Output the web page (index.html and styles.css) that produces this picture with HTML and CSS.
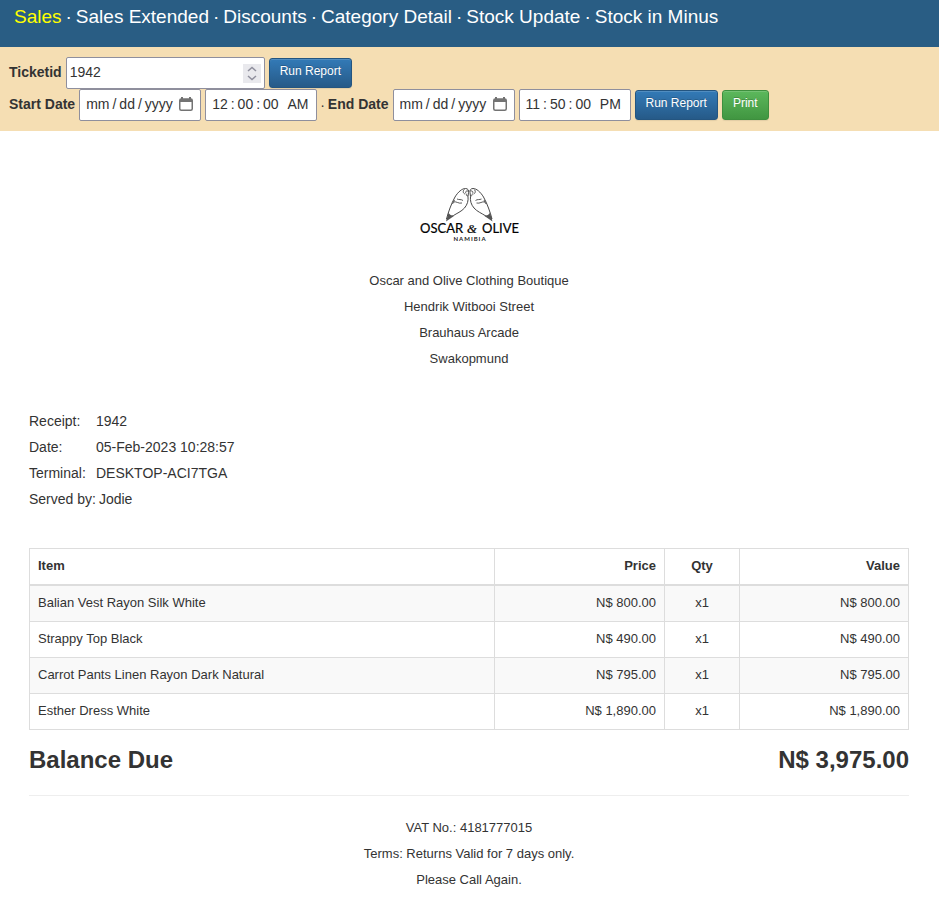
FILE: index.html
```html
<!DOCTYPE html>
<html lang="en">
<head>
<meta charset="utf-8">
<meta name="viewport" content="width=device-width, initial-scale=1">
<title>Sales</title>
<link rel="stylesheet" href="styles.css">
</head>
<body>
<nav class="topnav">
  <a class="active" href="#">Sales</a><span>&middot;</span>
  <a href="#">Sales Extended</a><span>&middot;</span>
  <a href="#">Discounts</a><span>&middot;</span>
  <a href="#">Category Detail</a><span>&middot;</span>
  <a href="#">Stock Update</a><span>&middot;</span>
  <a href="#">Stock in Minus</a>
</nav>

<section class="filters">
  <form class="filter-row">
    <label for="ticket">Ticketid</label>
    <span class="number-field">
      <input class="field ticket" id="ticket" type="number" value="1942">
      <svg class="spinner" viewBox="0 0 18 19" aria-hidden="true"><path d="M5 7 9 3.500 13 7M5 12 9 15.500 13 12"/></svg>
    </span>
    <button class="btn primary" type="button">Run Report</button>
  </form>
  <form class="filter-row">
    <label for="start-date">Start Date</label>
    <input class="field date" id="start-date" type="date">
    <input class="field time" type="time" step="1" value="00:00:00" aria-label="Start time">
    <span class="dot">&middot;</span>
    <label for="end-date">End Date</label>
    <input class="field date" id="end-date" type="date">
    <input class="field time" type="time" step="1" value="23:50:00" aria-label="End time">
    <button class="btn primary" type="button">Run Report</button>
    <button class="btn success" type="button">Print</button>
  </form>
</section>

<main class="receipt">
  <svg class="logo" viewBox="0 0 104 58" role="img" aria-label="Oscar and Olive Namibia">
    <defs>
      <g id="wing">
        <path d="M29.500 34C31 28 34.500 18 38 12c3-5 7-8.500 10.500-8.500 2.500 0 3.500 2 3 4l-.5 4c.5 4-.5 8-3.500 11.500-3 3.500-8 5.500-11 7.500z"/>
        <path class="fine" d="M47.500 4.500c-2 1-1.500 4 .5 4.500M51 6c-2-.5-3 1-2 2.500M51 11c-1.500 0-2-1-1.500-2M36.500 17c3-1 5 2 8.500 1M40 14c2 1 4 0 6 1.500M37.500 15l-2 4"/>
        <path class="tip" d="M29 36.500l2.500-9c1 2.500 3 3 5.500 3.500z"/>
      </g>
    </defs>
    <use href="#wing"/>
    <use href="#wing" transform="matrix(-1 0 0 1 104.500 0)"/>
    <text class="brand" x="3" y="48">OSCAR</text>
    <text class="amp" x="50" y="48">&amp;</text>
    <text class="brand" x="65" y="48">OLIVE</text>
    <text class="place" x="53" y="56">NAMIBIA</text>
  </svg>

  <address class="centered">Oscar and Olive Clothing Boutique<br>Hendrik Witbooi Street<br>Brauhaus Arcade<br>Swakopmund</address>

  <dl class="meta">
    <div><dt>Receipt:</dt><dd>1942</dd></div>
    <div><dt>Date:</dt><dd>05-Feb-2023 10:28:57</dd></div>
    <div><dt>Terminal:</dt><dd>DESKTOP-ACI7TGA</dd></div>
    <div><dt>Served by:</dt><dd>Jodie</dd></div>
  </dl>

  <table class="items">
    <colgroup><col><col class="price"><col class="qty"><col class="value"></colgroup>
    <thead>
      <tr><th>Item</th><th class="num">Price</th><th class="mid">Qty</th><th class="num">Value</th></tr>
    </thead>
    <tbody>
      <tr><td>Balian Vest Rayon Silk White</td><td class="num">N$ 800.00</td><td class="mid">x1</td><td class="num">N$ 800.00</td></tr>
      <tr><td>Strappy Top Black</td><td class="num">N$ 490.00</td><td class="mid">x1</td><td class="num">N$ 490.00</td></tr>
      <tr><td>Carrot Pants Linen Rayon Dark Natural</td><td class="num">N$ 795.00</td><td class="mid">x1</td><td class="num">N$ 795.00</td></tr>
      <tr><td>Esther Dress White</td><td class="num">N$ 1,890.00</td><td class="mid">x1</td><td class="num">N$ 1,890.00</td></tr>
    </tbody>
  </table>

  <div class="balance"><span>Balance Due</span><span>N$ 3,975.00</span></div>

  <footer class="centered">VAT No.: 4181777015<br>Terms: Returns Valid for 7 days only.<br>Please Call Again.</footer>
</main>
</body>
</html>
```
FILE: styles.css
```css
* { box-sizing: border-box; }

body {
  margin: 0 3px 0 0;
  background: #fff;
  color: #333;
  font: 14px/20px "Liberation Sans", Arial, sans-serif;
}

.topnav {
  display: flex;
  flex-wrap: wrap;
  gap: 4px;
  padding: 4px 14px 17px;
  background: #295d84;
  color: #fff;
  font-size: 19px;
  line-height: 26px;
}
.topnav a { color: #fff; text-decoration: none; }
.topnav a.active { color: #ff0; }

.filters { padding: 10px 9px; background: #f5deb3; }
.filter-row { display: flex; align-items: center; gap: 4px; }
.filter-row label { padding-bottom: 2px; font-weight: bold; }
.dot { margin: 0 -1px; }

.field {
  height: 32px;
  margin: 0;
  border: 1px solid #8f8f9d;
  border-radius: 2px;
  background: #fff;
  color: #333;
  font: inherit;
}
.number-field { position: relative; display: flex; }
.ticket { width: 199px; padding: 0 3px 2px; appearance: textfield; }
.ticket::-webkit-inner-spin-button { appearance: none; margin: 0; }
.spinner {
  position: absolute;
  top: 7px;
  right: 4px;
  width: 18px;
  height: 19px;
  background: #e9e9ed;
  fill: none;
  stroke: #8f8f9d;
  stroke-width: 1.5;
  pointer-events: none;
}
.date { width: 122px; padding: 0 7px 2px 6px; }
.time { width: 112px; padding: 0 6px 2px; }
.field::-webkit-datetime-edit,
.field::-webkit-datetime-edit-fields-wrapper { padding: 0; }
.field::-webkit-datetime-edit-month-field,
.field::-webkit-datetime-edit-day-field,
.field::-webkit-datetime-edit-year-field,
.field::-webkit-datetime-edit-hour-field,
.field::-webkit-datetime-edit-minute-field,
.field::-webkit-datetime-edit-second-field,
.field::-webkit-datetime-edit-ampm-field { padding: 0; color: #333; }
.field::-webkit-datetime-edit-text { padding: 0 3px; color: #333; }
.date::-webkit-calendar-picker-indicator {
  width: 14px;
  height: 14px;
  margin: 0;
  padding: 0;
  background: url("data:image/svg+xml,%3Csvg xmlns='http://www.w3.org/2000/svg' viewBox='0 0 14 14'%3E%3Cpath d='M3 0v2M11 0v2' stroke='%23737373' stroke-width='2'/%3E%3Crect x='.75' y='2' width='12.500' height='11.250' rx='1.500' fill='none' stroke='%23737373' stroke-width='1.500'/%3E%3Cpath d='M1 2h12v3H1z' fill='%23737373'/%3E%3C/svg%3E") center / 14px 14px no-repeat;
}
.time::-webkit-calendar-picker-indicator { display: none; }

.btn {
  height: 30px;
  padding: 3px 10px 7px;
  border: 1px solid;
  border-radius: 3px;
  color: #fff;
  font: 12px/18px "Liberation Sans", Arial, sans-serif;
  text-shadow: 0 -1px 0 rgba(0, 0, 0, .2);
  box-shadow: inset 0 1px 0 rgba(255, 255, 255, .15), 0 1px 1px rgba(0, 0, 0, .08);
}
.primary { background: linear-gradient(#337ab7, #265a88); border-color: #245580; }
.success { background: linear-gradient(#5cb85c, #419641); border-color: #3e8f3e; }

.receipt { padding: 54px 30px 20px 29px; }
.logo {
  display: block;
  width: 104px;
  height: 58px;
  margin: 0 auto;
  fill: none;
  stroke: #333;
  stroke-width: 0.9;
}
.fine { stroke-width: 0.8; }
.tip { fill: #555; stroke: none; }
.brand { font: 13px Lato, sans-serif; fill: #000; stroke: #000; stroke-width: 0.2; }
.amp { font: italic bold 13px "Liberation Serif", serif; fill: #222; stroke: none; }
.place { font: bold 6px Lato, sans-serif; letter-spacing: 1px; text-anchor: middle; fill: #222; stroke: none; }

.centered {
  margin-top: 25px;
  font-size: 13px;
  font-style: normal;
  line-height: 26px;
  text-align: center;
}

.meta { margin: 36px 0; line-height: 26px; }
.meta div { display: flex; gap: 3px; }
.meta dt { min-width: 64px; }
.meta dd { margin: 0; }

.items {
  width: 100%;
  table-layout: fixed;
  border-collapse: collapse;
  font-size: 13px;
  line-height: 19px;
}
.items .price { width: 170px; }
.items .qty { width: 75px; }
.items .value { width: 169px; }
.items th, .items td { padding: 7px 8px 9px; border: 1px solid #ddd; text-align: left; }
.items thead th { border-bottom-width: 2px; }
.items tbody tr:nth-child(odd) { background: #f9f9f9; }
.items .num { text-align: right; }
.items .mid { text-align: center; }

.balance {
  display: flex;
  justify-content: space-between;
  padding: 16px 0 21px;
  border-bottom: 1px solid #eee;
  font-size: 24px;
  font-weight: bold;
  line-height: 28px;
}
footer.centered { margin-top: 19px; }
```
